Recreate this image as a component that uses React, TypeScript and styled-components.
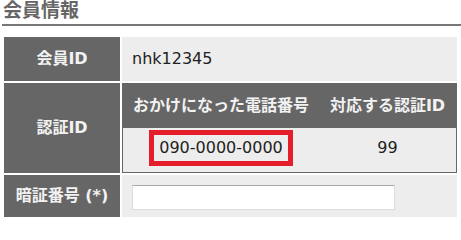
import React from "react";
import styled, { createGlobalStyle } from "styled-components";

const Global = createGlobalStyle`
  * { box-sizing: border-box; }
  html, body { margin: 0; padding: 0; background: #fff; }
  body {
    font-family: "DejaVu Sans", "Noto Sans CJK JP", sans-serif;
    font-size: 16px;
    color: #222;
  }
`;

const Page = styled.div`
  padding-left: 2px;
`;

const Title = styled.h1`
  margin: 0;
  padding: 0 0 4px 1px;
  font-size: 19px;
  line-height: 20px;
  font-weight: bold;
  color: #666;
  border-bottom: 2px solid #777;
`;

const Table = styled.table`
  margin-top: 9px;
  width: 457px;
  border-spacing: 2px;
  table-layout: fixed;
`;

const Th = styled.th`
  width: 116px;
  background: #666;
  color: #f2f2f2;
  font-weight: bold;
  text-align: center;
  vertical-align: middle;
  line-height: 24px;
  padding: 0;
`;

const Td = styled.td<{ $pad?: string }>`
  background: #ededed;
  line-height: 24px;
  padding: ${(p) => p.$pad ?? "10px"};
  vertical-align: top;
`;

const Inner = styled.table`
  width: 100%;
  border-collapse: collapse;
  border: 1px solid #666;
`;

const InnerTh = styled.th<{ $w?: string }>`
  width: ${(p) => p.$w ?? "auto"};
  height: 44px;
  background: #666;
  color: #f2f2f2;
  font-weight: bold;
  text-align: center;
  line-height: 24px;
  padding: 0 10px;
  white-space: nowrap;
`;

const InnerTd = styled.td`
  height: 44px;
  padding: 2px 10px 6px;
  line-height: 36px;
  text-align: center;
  vertical-align: top;
  background: #ededed;
`;

const Highlight = styled.span`
  display: inline-block;
  vertical-align: top;
  border: 5px solid #e41f2b;
  padding: 0 5px;
  line-height: 26px;
`;

const Input = styled.input`
  display: block;
  width: 263px;
  height: 25px;
  margin: 0;
  border: 1px solid #dcdcdc;
  border-top-color: #aaa;
  background: #fff;
  font: inherit;
`;

export default function App() {
  return (
    <Page>
      <Global />
      <Title>会員情報</Title>
      <Table>
        <tbody>
          <tr>
            <Th>会員ID</Th>
            <Td>nhk12345</Td>
          </tr>
          <tr>
            <Th>認証ID</Th>
            <Td $pad="0">
              <Inner>
                <thead>
                  <tr>
                    <InnerTh $w="196px">おかけになった電話番号</InnerTh>
                    <InnerTh>対応する認証ID</InnerTh>
                  </tr>
                </thead>
                <tbody>
                  <tr>
                    <InnerTd>
                      <Highlight>090-0000-0000</Highlight>
                    </InnerTd>
                    <InnerTd>99</InnerTd>
                  </tr>
                </tbody>
              </Inner>
            </Td>
          </tr>
          <tr>
            <Th>暗証番号 (*)</Th>
            <Td $pad="10px 10px 7px">
              <Input type="text" />
            </Td>
          </tr>
        </tbody>
      </Table>
    </Page>
  );
}
